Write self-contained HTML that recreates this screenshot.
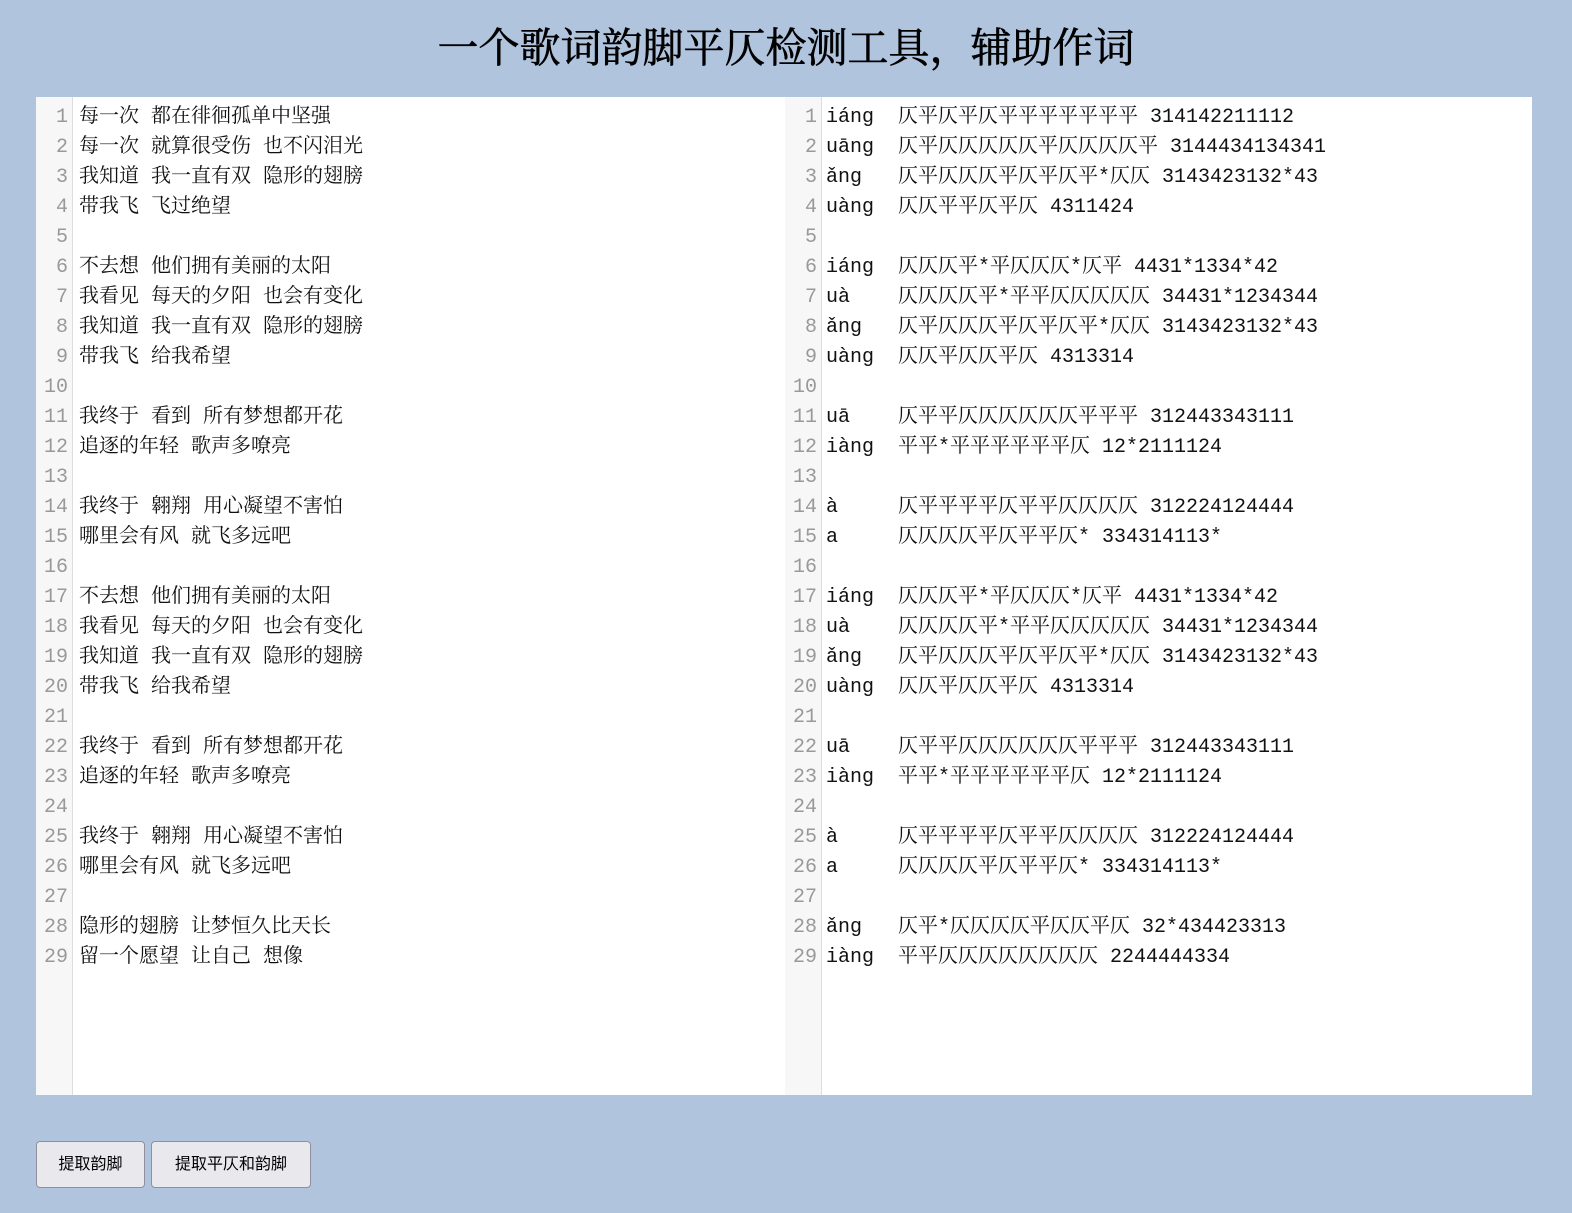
<!DOCTYPE html>
<html><head><meta charset="utf-8"><style>
html,body{margin:0;padding:0;background:#b0c4de;width:1572px;height:1213px;overflow:hidden}
h1{position:absolute;left:0;width:1572px;top:20px;margin:0;text-align:center;font:normal 41px/56px "Liberation Serif","Noto Serif CJK SC",serif;color:#000;-webkit-text-stroke:0.6px #000}
.ed{position:absolute;top:97px;height:998px;background:#fff;overflow:hidden}
.g{position:absolute;left:0;top:0;bottom:0;width:36px;background:#f7f7f7;border-right:1px solid #ddd}
.ln{position:absolute;top:103px;font:20px/30px "Liberation Mono","Noto Serif CJK SC",monospace;white-space:pre;color:#999;text-align:right;width:32px}
.tx{position:absolute;top:103px;font:20px/30px "Liberation Mono","Noto Serif CJK SC",monospace;white-space:pre;color:#111}
.btn{position:absolute;top:1141px;height:45px;background:#e9e9ed;border:1px solid #8f8f9d;border-radius:4px;font:16px/46px "Liberation Sans","Noto Sans CJK SC",sans-serif;color:#000;text-align:center}
</style></head><body>
<h1>一个歌词韵脚平仄检测工具，辅助作词</h1>
<div class="ed" style="left:36px;width:750px"><div class="g"></div></div>
<div class="ed" style="left:785px;width:747px"><div class="g"></div></div>
<div class="ln" style="left:36px">1
2
3
4
5
6
7
8
9
10
11
12
13
14
15
16
17
18
19
20
21
22
23
24
25
26
27
28
29</div>
<div class="ln" style="left:785px">1
2
3
4
5
6
7
8
9
10
11
12
13
14
15
16
17
18
19
20
21
22
23
24
25
26
27
28
29</div>
<div class="tx" style="left:79px">每一次 都在徘徊孤单中坚强
每一次 就算很受伤 也不闪泪光
我知道 我一直有双 隐形的翅膀
带我飞 飞过绝望

不去想 他们拥有美丽的太阳
我看见 每天的夕阳 也会有变化
我知道 我一直有双 隐形的翅膀
带我飞 给我希望

我终于 看到 所有梦想都开花
追逐的年轻 歌声多嘹亮

我终于 翱翔 用心凝望不害怕
哪里会有风 就飞多远吧

不去想 他们拥有美丽的太阳
我看见 每天的夕阳 也会有变化
我知道 我一直有双 隐形的翅膀
带我飞 给我希望

我终于 看到 所有梦想都开花
追逐的年轻 歌声多嘹亮

我终于 翱翔 用心凝望不害怕
哪里会有风 就飞多远吧

隐形的翅膀 让梦恒久比天长
留一个愿望 让自己 想像</div>
<div class="tx" style="left:826px">iáng  仄平仄平仄平平平平平平平 314142211112
uāng  仄平仄仄仄仄仄平仄仄仄仄平 3144434134341
ǎng   仄平仄仄仄平仄平仄平*仄仄 3143423132*43
uàng  仄仄平平仄平仄 4311424

iáng  仄仄仄平*平仄仄仄*仄平 4431*1334*42
uà    仄仄仄仄平*平平仄仄仄仄仄 34431*1234344
ǎng   仄平仄仄仄平仄平仄平*仄仄 3143423132*43
uàng  仄仄平仄仄平仄 4313314

uā    仄平平仄仄仄仄仄仄平平平 312443343111
iàng  平平*平平平平平平仄 12*2111124

à     仄平平平平仄平平仄仄仄仄 312224124444
a     仄仄仄仄平仄平平仄* 334314113*

iáng  仄仄仄平*平仄仄仄*仄平 4431*1334*42
uà    仄仄仄仄平*平平仄仄仄仄仄 34431*1234344
ǎng   仄平仄仄仄平仄平仄平*仄仄 3143423132*43
uàng  仄仄平仄仄平仄 4313314

uā    仄平平仄仄仄仄仄仄平平平 312443343111
iàng  平平*平平平平平平仄 12*2111124

à     仄平平平平仄平平仄仄仄仄 312224124444
a     仄仄仄仄平仄平平仄* 334314113*

ǎng   仄平*仄仄仄仄平仄仄平仄 32*434423313
iàng  平平仄仄仄仄仄仄仄仄 2244444334</div>
<div class="btn" style="left:36px;width:107px">提取韵脚</div>
<div class="btn" style="left:151px;width:158px">提取平仄和韵脚</div>
</body></html>
